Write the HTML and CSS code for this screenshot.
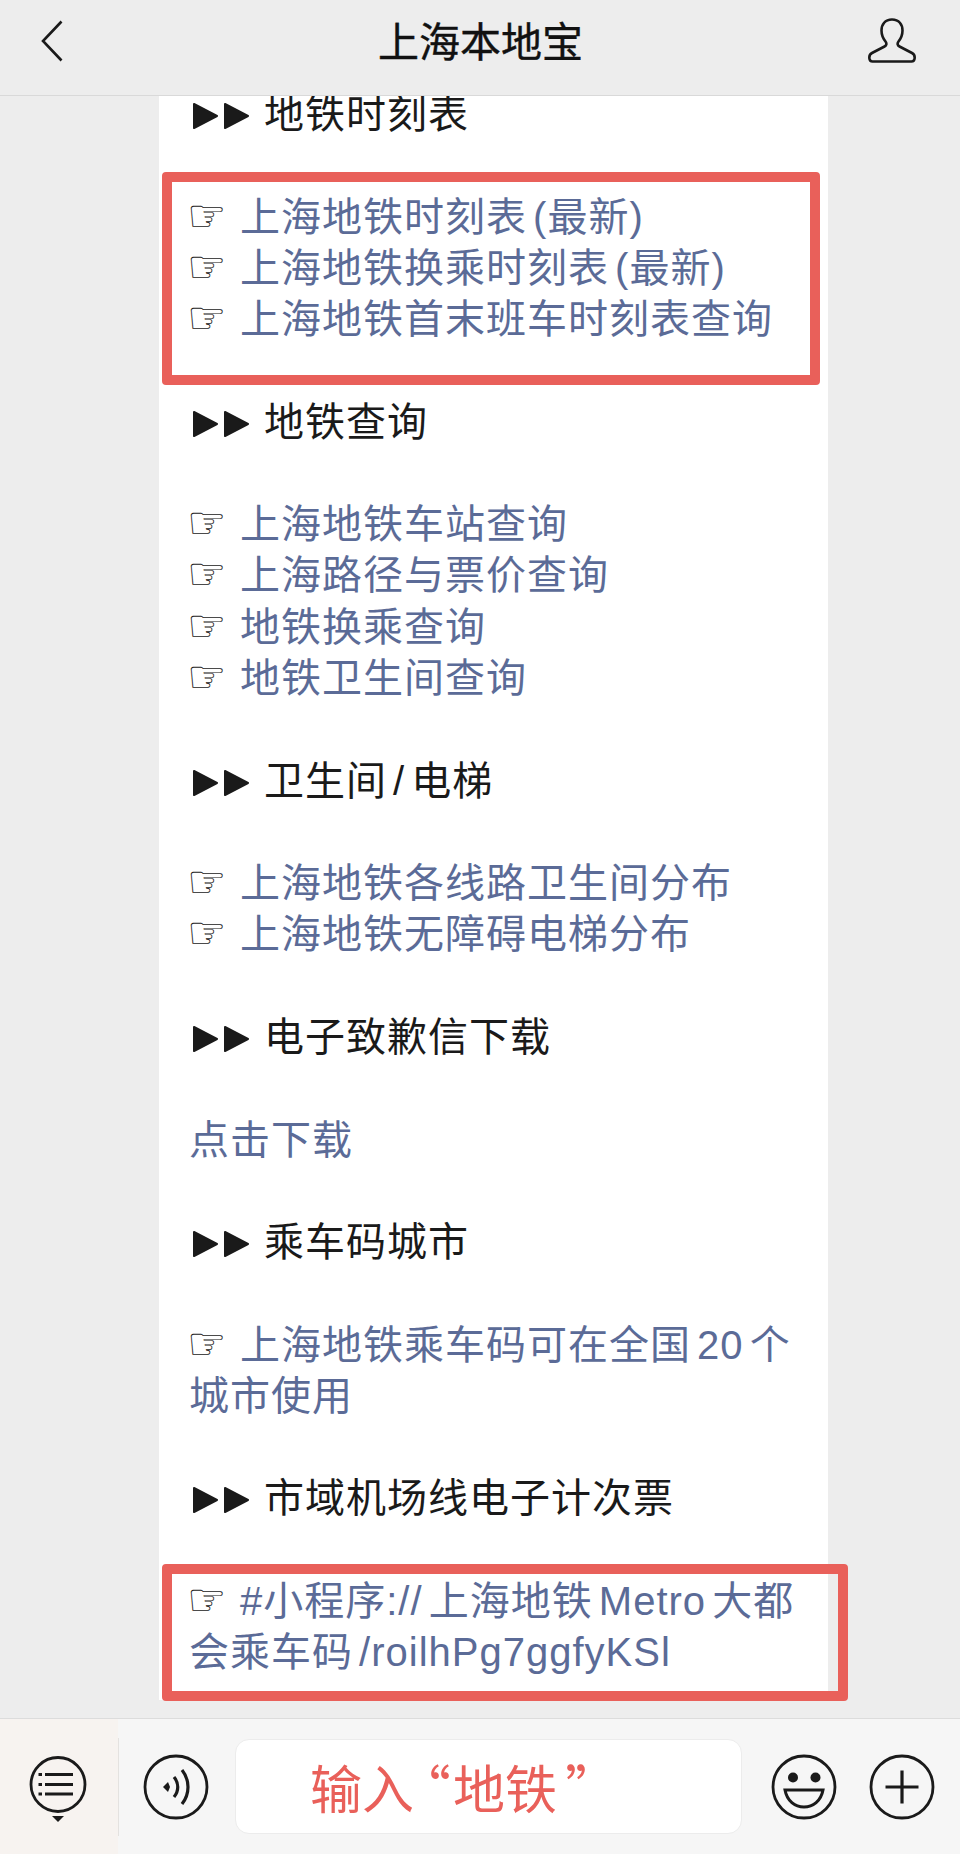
FILE: index.html
```html
<!DOCTYPE html>
<html>
<head>
    <title>上海本地宝</title>
    <link rel="stylesheet" href="styles.css">
</head>
<body>
    <div class="page">
        <header class="topbar">
            <svg class="back-icon" width="22" height="42" viewBox="0 0 22 42"><path d="M20.5 1.5 2 21l18.5 19.500" fill="none" stroke="#1a1a1a" stroke-width="2.600"/></svg>
            <h1 class="title">上海本地宝</h1>
            <svg class="user-icon" width="48" height="46" viewBox="0 0 48 46"><path d="M24 1.500c-7 0-10.500 5-10.500 11 0 5 2 8.500 4 11 1.500 2 1 4-1 5L4 35c-2.500 1.300-3 3.500-2.500 6 .3 1.500 1 2.500 3 2.500h39c2 0 2.700-1 3-2.500.5-2.500 0-4.700-2.500-6l-12.500-6.500c-2-1-2.500-3-1-5 2-2.500 4-6 4-11 0-6-3.500-11-10.500-11z" fill="none" stroke="#1a1a1a" stroke-width="2.600" stroke-linejoin="round"/></svg>
        </header>

        <main class="content">
            <div class="article">
                <p class="heading"><svg class="arrows" width="58" height="28" viewBox="0 0 58 28"><path d="M2 2l23 12L2 26zM33 2l23 12-23 12z" fill="#1a1a1a" stroke="#1a1a1a" stroke-width="2" stroke-linejoin="round"/></svg>地铁时刻表</p>
                <p class="blank"></p>
                <p class="link"><span class="hand">☞</span>上海地铁时刻表 (最新)</p>
                <p class="link"><span class="hand">☞</span>上海地铁换乘时刻表 (最新)</p>
                <p class="link"><span class="hand">☞</span>上海地铁首末班车时刻表查询</p>
                <p class="blank"></p>
                <p class="heading"><svg class="arrows" width="58" height="28" viewBox="0 0 58 28"><path d="M2 2l23 12L2 26zM33 2l23 12-23 12z" fill="#1a1a1a" stroke="#1a1a1a" stroke-width="2" stroke-linejoin="round"/></svg>地铁查询</p>
                <p class="blank"></p>
                <p class="link"><span class="hand">☞</span>上海地铁车站查询</p>
                <p class="link"><span class="hand">☞</span>上海路径与票价查询</p>
                <p class="link"><span class="hand">☞</span>地铁换乘查询</p>
                <p class="link"><span class="hand">☞</span>地铁卫生间查询</p>
                <p class="blank"></p>
                <p class="heading"><svg class="arrows" width="58" height="28" viewBox="0 0 58 28"><path d="M2 2l23 12L2 26zM33 2l23 12-23 12z" fill="#1a1a1a" stroke="#1a1a1a" stroke-width="2" stroke-linejoin="round"/></svg>卫生间 / 电梯</p>
                <p class="blank"></p>
                <p class="link"><span class="hand">☞</span>上海地铁各线路卫生间分布</p>
                <p class="link"><span class="hand">☞</span>上海地铁无障碍电梯分布</p>
                <p class="blank"></p>
                <p class="heading"><svg class="arrows" width="58" height="28" viewBox="0 0 58 28"><path d="M2 2l23 12L2 26zM33 2l23 12-23 12z" fill="#1a1a1a" stroke="#1a1a1a" stroke-width="2" stroke-linejoin="round"/></svg>电子致歉信下载</p>
                <p class="blank"></p>
                <p class="link">点击下载</p>
                <p class="blank"></p>
                <p class="heading"><svg class="arrows" width="58" height="28" viewBox="0 0 58 28"><path d="M2 2l23 12L2 26zM33 2l23 12-23 12z" fill="#1a1a1a" stroke="#1a1a1a" stroke-width="2" stroke-linejoin="round"/></svg>乘车码城市</p>
                <p class="blank"></p>
                <p class="link"><span class="hand">☞</span>上海地铁乘车码可在全国 20 个城市使用</p>
                <p class="blank"></p>
                <p class="heading"><svg class="arrows" width="58" height="28" viewBox="0 0 58 28"><path d="M2 2l23 12L2 26zM33 2l23 12-23 12z" fill="#1a1a1a" stroke="#1a1a1a" stroke-width="2" stroke-linejoin="round"/></svg>市域机场线电子计次票</p>
                <p class="blank"></p>
                <p class="link"><span class="hand">☞</span>#小程序:// 上海地铁 Metro 大都会乘车码 /roilhPg7ggfyKSl</p>

                <div class="mark mark-top"></div>
                <div class="mark mark-bottom"></div>
            </div>
        </main>

        <footer class="inputbar">
            <div class="menu-side">
                <svg width="58" height="66" viewBox="0 0 58 66">
                    <circle cx="29" cy="28.500" r="27" fill="none" stroke="#1a1a1a" stroke-width="2.800"/>
                    <path d="M16 18.500h28M16 28.500h28M16 38h28" fill="none" stroke="#1a1a1a" stroke-width="3.200"/>
                    <path d="M9.500 18.500h3.500M9.500 28.500h3.500M9.500 38h3.500" fill="none" stroke="#1a1a1a" stroke-width="3.200"/>
                    <path d="M23 60h12l-6 6z" fill="#1a1a1a"/>
                </svg>
            </div>
            <div class="divider"></div>
            <div class="input-side">
                <svg class="round-icon" width="66" height="66" viewBox="0 0 66 66">
                    <circle cx="33" cy="33" r="31" fill="none" stroke="#1a1a1a" stroke-width="2.800"/>
                    <path d="M20 33l5-5 2 5-2 5z" fill="#1a1a1a"/>
                    <path d="M31 23c5 6 5 14 0 20M39 16c8 10 8 24 0 34" fill="none" stroke="#1a1a1a" stroke-width="3.200"/>
                </svg>
                <div class="input-box">输入<span class="quote-open">“</span>地铁<span class="quote-close">”</span></div>
                <svg class="round-icon" width="66" height="66" viewBox="0 0 66 66">
                    <circle cx="33" cy="33" r="31" fill="none" stroke="#1a1a1a" stroke-width="2.800"/>
                    <circle cx="22" cy="23.500" r="5" fill="#1a1a1a"/>
                    <circle cx="44.500" cy="23.500" r="5" fill="#1a1a1a"/>
                    <path d="M14 36h38c-2 11-10 17-19 17s-17-6-19-17z" fill="none" stroke="#1a1a1a" stroke-width="3"/>
                </svg>
                <svg class="round-icon" width="66" height="66" viewBox="0 0 66 66">
                    <circle cx="33" cy="33" r="31" fill="none" stroke="#1a1a1a" stroke-width="2.800"/>
                    <path d="M16.500 33h33M33 16.500v33" fill="none" stroke="#1a1a1a" stroke-width="3.200"/>
                </svg>
            </div>
        </footer>
    </div>
</body>
</html>
```

FILE: styles.css
```css
* {
    box-sizing: border-box;
}
body {
    margin: 0;
    font-family: "Liberation Sans", "Noto Sans CJK SC", sans-serif;
    background-color: #ededed;
}
p {
    margin: 0;
}
.page {
    display: flex;
    flex-direction: column;
    width: 960px;
    height: 1854px;
    overflow: hidden;
}

/* top bar */
.topbar {
    position: relative;
    z-index: 2;
    display: flex;
    align-items: flex-start;
    justify-content: space-between;
    flex: none;
    height: 96px;
    padding: 20px 44px 0 41px;
    background-color: #ededed;
    border-bottom: 1px solid #d9d9d9;
}
.user-icon {
    margin-top: -2px;
}
.title {
    margin: 1px 0 0 30px;
    font-size: 41px;
    line-height: 44px;
    font-weight: 400;
    color: #111111;
    -webkit-text-stroke: 0.4px #111111;
}

/* article */
.content {
    flex: 1;
    overflow: hidden;
}
.article {
    position: relative;
    width: 669px;
    height: 1611px;
    margin: -7px 0 0 159px;
    padding: 0 28px 0 30px;
    background-color: #ffffff;
    font-size: 40px;
    line-height: 51.28px;
    letter-spacing: 1px;
    word-spacing: -6px;
}
.blank {
    height: 51.28px;
}
.heading {
    color: #1a1a1a;
}
.link {
    color: #5b6b97;
}
.arrows {
    margin: 0 14px 0 3px;
    vertical-align: -2px;
}
.hand {
    display: inline-block;
    width: 53px;
    margin-left: -2px;
    font-family: "DejaVu Sans", sans-serif;
    font-size: 44px;
    line-height: 0;
    color: #222222;
    letter-spacing: 0;
}
.mark {
    position: absolute;
    left: 3px;
    border: 10px solid #e9605a;
    border-radius: 4px;
}
.mark-top {
    top: 83px;
    width: 658px;
    height: 213px;
}
.mark-bottom {
    top: 1475px;
    width: 686px;
    height: 137px;
}

/* input bar */
.inputbar {
    display: flex;
    align-items: center;
    flex: none;
    height: 136px;
    background-color: #f6f6f6;
    border-top: 1px solid #dcdcdc;
}
.menu-side {
    flex: none;
    align-self: stretch;
    width: 118px;
    padding: 37px 0 0 29px;
    background-color: #f7f3f0;
}
.divider {
    flex: none;
    width: 1px;
    height: 98px;
    background-color: #e4e2e0;
}
.input-side {
    display: flex;
    align-items: center;
    flex: 1;
    padding: 0 25px 0 24px;
}
.round-icon {
    flex: none;
}
.input-box {
    flex: none;
    width: 507px;
    height: 95px;
    margin: 0 29px 0 26px;
    padding: 3px 0 0 74px;
    background-color: #ffffff;
    border: 1px solid #ececec;
    border-radius: 14px;
    color: #e9605a;
    font-family: "Noto Sans CJK SC", sans-serif;
    font-size: 52px;
    line-height: 88px;
}
.quote-open,
.quote-close {
    font-feature-settings: "palt";
}
.quote-open {
    margin: 0 3px 0 10px;
}
.quote-close {
    margin-left: 9px;
}
.input-side .round-icon:last-child {
    margin-left: 32px;
}
```
